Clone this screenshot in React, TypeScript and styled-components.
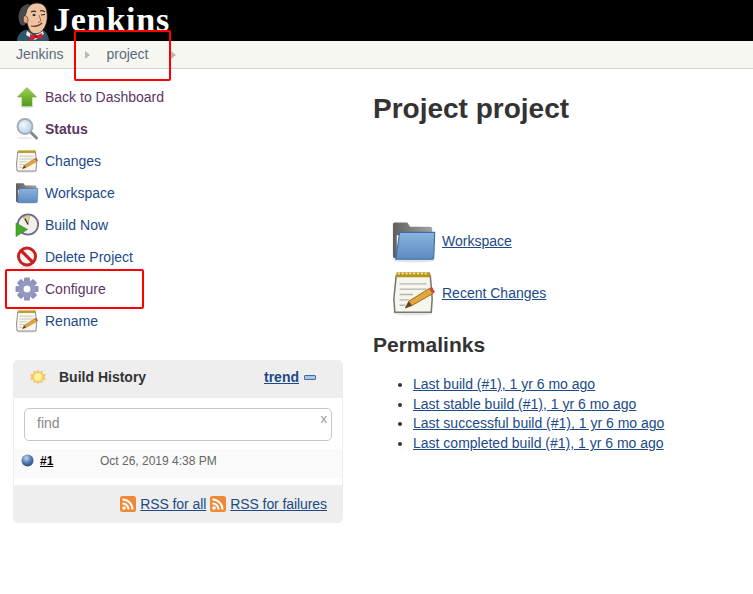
import React from 'react';
import styled, { createGlobalStyle } from 'styled-components';

const GlobalStyle = createGlobalStyle`
  html, body { margin: 0; padding: 0; background: #fff; }
  body { font-family: "Liberation Sans", Arial, sans-serif; font-size: 14px; color: #333; }
  a { color: #204a87; }
`;

const ButlerLogo = () => (
  <svg width="34" height="41" viewBox="0 0 34 41">
    <path d="M1 41c0-5 3-9 8-11l16-1c5 2 8 7 8 12z" fill="#2d5468" />
    <path d="M11 31l7 5 8-6 2 4-9 6-9-5z" fill="#eee" />
    <path d="M4 24C1 16 3 8 9 5c2-1 3-1 4-1 2 2-1 6-2 10-1 4-1 8-2 11-2 1-4 0-5-1z" fill="#4a4a4c" />
    <path d="M10 13c1-6 5-10 11-10 6 0 10 4 10 10 1 7-1 14-5 18-3 3-8 4-11 1-3-3-3-7-4-9-3-1-3-6-1-10z" fill="#eec3a2" stroke="#2a1f1a" strokeWidth=".8" />
    <path d="M8 16c2-1 4 1 4 4s-2 4-3 3c-2-1-2-6-1-7z" fill="#e3a988" stroke="#3a2a22" strokeWidth=".6" />
    <path d="M15 12c2-1 4-1 5 0M24 11c2-1 4 0 5 1" stroke="#3a2a22" strokeWidth="1.200" fill="none" />
    <ellipse cx="18" cy="15" rx="1.600" ry="1.100" fill="#222" />
    <path d="M25 15l4-.5" stroke="#222" strokeWidth="1.200" />
    <path d="M23 15l2 6-3 1.500" stroke="#a86f50" strokeWidth="1" fill="none" />
    <path d="M15 26c3 1 8 0 11-3" stroke="#7a3326" strokeWidth="1.300" fill="none" />
    <path d="M14 34l6 2 6-3 1 6-7-1-6 3z" fill="#d3202c" />
    <rect x="18.500" y="35" width="3" height="3" fill="#a8141f" />
  </svg>
);

const Arrow = () => (
  <svg width="24" height="24" viewBox="0 0 24 24">
    <defs>
      <linearGradient id="arrowFill" x1="0" y1="0" x2="0" y2="1">
        <stop offset="0" stopColor="#9fd04f" />
        <stop offset="1" stopColor="#4f9a1e" />
      </linearGradient>
    </defs>
    <ellipse cx="12" cy="21.500" rx="7" ry="1.500" fill="#ddd" />
    <path d="M12 2.500L21.500 12H17V21H7V12H2.500z" fill="url(#arrowFill)" stroke="#6aa92c" strokeWidth=".6" />
  </svg>
);

const Magnifier = () => (
  <svg width="24" height="24" viewBox="0 0 24 24">
    <defs>
      <radialGradient id="lensFill" cx="0.4" cy="0.4" r="0.7">
        <stop offset="0" stopColor="#f3f8fc" />
        <stop offset="1" stopColor="#a9cbe8" />
      </radialGradient>
    </defs>
    <ellipse cx="10" cy="21" rx="8" ry="1.500" fill="#eee" />
    <path d="M15.500 15l6 6" stroke="#85878a" strokeWidth="3" strokeLinecap="round" />
    <circle cx="10" cy="9.500" r="7.500" fill="url(#lensFill)" stroke="#a3aab2" strokeWidth="1.800" />
  </svg>
);

const Notepad = ({ size = 24 }: { size?: number }) => (
  <svg width={size} height={size} viewBox="0 0 24 24">
    <ellipse cx="11.500" cy="22.700" rx="10" ry="1.100" fill="#e6e6e6" />
    <path d="M2.700 3h17.800l1 12-.5 7H2l-.5-7z" fill="#f6f6ef" stroke="#77776f" strokeWidth=".8" />
    <rect x="2.800" y="1.200" width="17.700" height="2.600" rx=".6" fill="#b3941f" />
    <path d="M3.500 1.800h16" stroke="#efe08a" strokeWidth="1.100" strokeDasharray="1.200 .8" />
    <path d="M4.500 7.200h14M4.500 10h14M4.500 12.800h7M4.500 15.600h5M4.500 18.400h3" stroke="#b5b5ad" strokeWidth=".7" />
    <path d="M7.500 19.800l1.800-3.500L20 9.600l1.800 2.700L11 18.500z" fill="#e4a63f" stroke="#97691d" strokeWidth=".5" />
    <path d="M20 9.600l1.800 2.700 1.200-.8-1.700-2.700z" fill="#d9423a" />
    <path d="M7.500 19.800l1.800-3.500 1.700 2.200z" fill="#5a4630" />
  </svg>
);

const Folder = ({ size = 24 }: { size?: number }) => (
  <svg width={size} height={size} viewBox="0 0 24 24">
    <defs>
      <linearGradient id="folderBack" x1="0" y1="0" x2="1" y2="0">
        <stop offset="0" stopColor="#5f5f5d" />
        <stop offset="1" stopColor="#a3a3a0" />
      </linearGradient>
      <linearGradient id="folderFront" x1="0" y1="0" x2="0" y2="1">
        <stop offset="0" stopColor="#8bb3de" />
        <stop offset="1" stopColor="#5c8ac2" />
      </linearGradient>
    </defs>
    <ellipse cx="12" cy="22" rx="11" ry="1.200" fill="#e4e4e4" />
    <path d="M1 3.500c0-.8.400-1.200 1-1.200h6.500l1.500 2.200h10.500c.5 0 1 .4 1 1V9H3v12H2c-.6 0-1-.4-1-1z" fill="url(#folderBack)" />
    <path d="M4.500 7.500H22.800L22.300 20.800c0 .4-.3.7-.7.700H2.500z" fill="url(#folderFront)" stroke="#3f6ea6" strokeWidth=".6" />
  </svg>
);

const Clock = () => (
  <svg width="24" height="24" viewBox="0 0 24 24">
    <circle cx="13" cy="11.500" r="10.200" fill="#f2f0ea" stroke="#71698a" strokeWidth="1.800" />
    <path d="M13 11.500L8 4.200a9 9 0 0 1 6.500-1.500z" fill="#ecd87a" stroke="#777" strokeWidth=".5" />
    <path d="M13 11.500l-3-6" stroke="#333" strokeWidth="1.300" />
    <path d="M1 10l11.500 6.500L1 23.500z" fill="#47a72a" stroke="#2f8a1d" strokeWidth=".6" />
  </svg>
);

const NoEntry = () => (
  <svg width="24" height="24" viewBox="0 0 24 24">
    <ellipse cx="12" cy="22" rx="8" ry="1.500" fill="#e6e6e6" />
    <circle cx="12" cy="11.500" r="8.500" fill="#f7f7f7" stroke="#c92020" strokeWidth="3" />
    <path d="M6 5.500l12 12" stroke="#c92020" strokeWidth="3.200" />
  </svg>
);

const gearTeeth = [0, 45, 90, 135];

const Gear = () => (
  <svg width="24" height="24" viewBox="0 0 24 24">
    {gearTeeth.map((angle) => (
      <rect key={angle} x="9" y="0.500" width="6" height="23" rx="1" fill="#8d91bb" transform={`rotate(${angle} 12 12)`} />
    ))}
    <circle cx="12" cy="12" r="8.500" fill="#9599c2" />
    <circle cx="12" cy="12" r="4" fill="#fff" stroke="#6f7399" strokeWidth=".6" />
  </svg>
);

const Sun = () => (
  <svg width="16" height="16" viewBox="0 0 16 16">
    <path d="M8 0l1.500 3 3-1.500 0 3.500 3.500 0-1.500 3 1.500 2.500-3.500.5 0 3-3-1-1.500 2.500-1.500-2.500-3 1 0-3-3.500-.5L1.500 8 0 5l3.500 0 0-3.500 3 1.500z" fill="#f3c766" />
    <circle cx="8" cy="8" r="4" fill="#fdf199" />
  </svg>
);

const Ball = () => (
  <svg width="13" height="13" viewBox="0 0 13 13">
    <defs>
      <radialGradient id="ball" cx="0.4" cy="0.3" r="0.8">
        <stop offset="0" stopColor="#c4d5ea" />
        <stop offset="0.5" stopColor="#4f7cb3" />
        <stop offset="1" stopColor="#1f3f70" />
      </radialGradient>
    </defs>
    <circle cx="6.500" cy="6.500" r="6" fill="url(#ball)" />
  </svg>
);

const Rss = () => (
  <svg width="16" height="16" viewBox="0 0 16 16">
    <rect width="16" height="16" rx="2.500" fill="#ee8a35" />
    <circle cx="4" cy="12" r="1.800" fill="#fff" />
    <path d="M2.500 7.500a6 6 0 0 1 6 6M2.500 3.500a10 10 0 0 1 10 10" stroke="#fff" strokeWidth="2" fill="none" />
  </svg>
);

const Page = styled.div`
  position: relative;
  width: 753px;
  height: 594px;
  overflow: hidden;
`;

const Header = styled.header`
  height: 41px;
  background: #000;
  display: flex;
  align-items: flex-end;
  padding-left: 16px;
  gap: 3px;
`;

const Brand = styled.span`
  font-family: "Liberation Serif", "Times New Roman", serif;
  font-weight: 700;
  font-size: 34px;
  line-height: 40px;
  color: #fff;
  letter-spacing: 0.8px;
  align-self: flex-start;
`;

const Breadcrumbs = styled.nav`
  height: 27px;
  background: #f6f7f0;
  border-bottom: 1px solid #d3d7cf;
  display: flex;
  align-items: center;
  padding-left: 16px;
  font-size: 14px;
  color: #5c6b7d;
`;

const Crumb = styled.span<{ $left: number }>`
  margin-left: ${(p) => p.$left}px;
  margin-top: -2px;
`;

const CrumbArrow = styled.span<{ $left: number }>`
  margin-left: ${(p) => p.$left}px;
  width: 0;
  height: 0;
  border-left: 5px solid #b8b8b8;
  border-top: 4px solid transparent;
  border-bottom: 4px solid transparent;
`;

const Main = styled.div`
  display: flex;
`;

const Side = styled.aside`
  width: 360px;
  flex: none;
  padding: 12px 10px 0 13px;
  box-sizing: border-box;
`;

const Tasks = styled.div`
  display: flex;
  flex-direction: column;
  margin-bottom: 23px;
`;

const Task = styled.div`
  height: 32px;
  display: flex;
  align-items: center;
  gap: 6px;
  padding-left: 2px;
`;

const TaskLink = styled.span<{ $visited?: boolean; $bold?: boolean }>`
  color: ${(p) => (p.$visited ? '#5c3566' : '#204a87')};
  font-weight: ${(p) => (p.$bold ? 700 : 400)};
`;

const HistoryCard = styled.section`
  width: 330px;
  background: #eee;
  border-radius: 5px;
  overflow: hidden;
`;

const HistoryHead = styled.div`
  height: 38px;
  display: flex;
  align-items: center;
  padding: 0 27px 4px 17px;
  box-sizing: border-box;
  font-weight: 700;
  color: #333;
`;

const HistoryTitle = styled.span`
  margin-left: 13px;
  flex: 1;
`;

const Trend = styled.a`
  text-decoration: underline;
  font-weight: 700;
`;

const Collapse = styled.span`
  width: 12px;
  height: 5px;
  margin-left: 5px;
  background: #a9c4e4;
  border: 1px solid #3f6ea6;
  box-sizing: border-box;
  border-radius: 1px;
`;

const HistoryBody = styled.div`
  background: #fff;
  margin: 0 1px;
  height: 87px;
  padding-top: 10px;
  box-sizing: border-box;
`;

const FindBox = styled.div`
  position: relative;
  margin: 0 10px;
  height: 33px;
  border: 1px solid #c8c8c0;
  border-radius: 5px;
  box-sizing: border-box;
  padding: 6px 12px;
  color: #888;
  font-size: 14px;
`;

const Clear = styled.span`
  position: absolute;
  right: 4px;
  top: 2px;
  font-size: 13px;
  color: #999;
`;

const BuildRow = styled.div`
  margin-top: 8px;
  height: 29px;
  background: #fafafa;
  display: flex;
  align-items: flex-start;
  padding: 5px 0 0 7px;
  box-sizing: border-box;
  font-size: 12px;
`;

const BuildId = styled.a`
  margin-left: 6px;
  width: 60px;
  color: #000;
  font-weight: 700;
  text-decoration: underline;
`;

const BuildTime = styled.span`
  color: #666;
`;

const HistoryFoot = styled.div`
  height: 37px;
  display: flex;
  align-items: center;
  justify-content: flex-end;
  padding: 0 16px 1px 0;
  gap: 4px;
`;

const RssLink = styled.a`
  text-decoration: underline;
  letter-spacing: -0.08px;
`;

const Content = styled.main`
  padding: 12px 0 0 13px;
`;

const Title = styled.h1`
  margin: 12px 0 0;
  font-size: 28px;
  line-height: 32px;
  font-weight: 700;
  color: #333;
`;

const MainLinks = styled.div`
  margin-top: 90px;
  padding-left: 18px;
  display: flex;
  flex-direction: column;
`;

const MainLink = styled.div`
  height: 52px;
  display: flex;
  align-items: center;
  gap: 5px;
`;

const Anchor = styled.a`
  text-decoration: underline;
`;

const SubTitle = styled.h2`
  margin: 0;
  margin-top: 13px;
  font-size: 21px;
  line-height: 26px;
  font-weight: 700;
  color: #333;
`;

const PermaList = styled.ul`
  margin: 17px 0 0;
  padding-left: 40px;
  line-height: 19.700px;
`;

const permalinks = [
  'Last build (#1), 1 yr 6 mo ago',
  'Last stable build (#1), 1 yr 6 mo ago',
  'Last successful build (#1), 1 yr 6 mo ago',
  'Last completed build (#1), 1 yr 6 mo ago',
];

const Callout = styled.div<{ $x: number; $y: number; $w: number; $h: number }>`
  position: absolute;
  left: ${(p) => p.$x}px;
  top: ${(p) => p.$y}px;
  width: ${(p) => p.$w}px;
  height: ${(p) => p.$h}px;
  box-sizing: border-box;
  border: 2px solid #f00;
  border-radius: 2px;
`;

export default function App() {
  return (
    <Page>
      <GlobalStyle />
      <Header>
        <ButlerLogo />
        <Brand>Jenkins</Brand>
      </Header>
      <Breadcrumbs>
        <Crumb $left={0}>Jenkins</Crumb>
        <CrumbArrow $left={22} />
        <Crumb $left={16}>project</Crumb>
        <CrumbArrow $left={22} />
      </Breadcrumbs>
      <Main>
        <Side>
          <Tasks>
            <Task><Arrow /><TaskLink $visited>Back to Dashboard</TaskLink></Task>
            <Task><Magnifier /><TaskLink $visited $bold>Status</TaskLink></Task>
            <Task><Notepad /><TaskLink>Changes</TaskLink></Task>
            <Task><Folder /><TaskLink>Workspace</TaskLink></Task>
            <Task><Clock /><TaskLink>Build Now</TaskLink></Task>
            <Task><NoEntry /><TaskLink>Delete Project</TaskLink></Task>
            <Task><Gear /><TaskLink $visited>Configure</TaskLink></Task>
            <Task><Notepad /><TaskLink>Rename</TaskLink></Task>
          </Tasks>
          <HistoryCard>
            <HistoryHead>
              <Sun />
              <HistoryTitle>Build History</HistoryTitle>
              <Trend>trend</Trend>
              <Collapse />
            </HistoryHead>
            <HistoryBody>
              <FindBox>
                find
                <Clear>x</Clear>
              </FindBox>
              <BuildRow>
                <Ball />
                <BuildId>#1</BuildId>
                <BuildTime>Oct 26, 2019 4:38 PM</BuildTime>
              </BuildRow>
            </HistoryBody>
            <HistoryFoot>
              <Rss />
              <RssLink>RSS for all</RssLink>
              <Rss />
              <RssLink>RSS for failures</RssLink>
            </HistoryFoot>
          </HistoryCard>
        </Side>
        <Content>
          <Title>Project project</Title>
          <MainLinks>
            <MainLink><Folder size={46} /><Anchor>Workspace</Anchor></MainLink>
            <MainLink><Notepad size={46} /><Anchor>Recent Changes</Anchor></MainLink>
          </MainLinks>
          <SubTitle>Permalinks</SubTitle>
          <PermaList>
            {permalinks.map((text) => (
              <li key={text}><Anchor>{text}</Anchor></li>
            ))}
          </PermaList>
        </Content>
      </Main>
      <Callout $x={74} $y={30} $w={97} $h={51} />
      <Callout $x={5} $y={269} $w={139} $h={40} />
    </Page>
  );
}
